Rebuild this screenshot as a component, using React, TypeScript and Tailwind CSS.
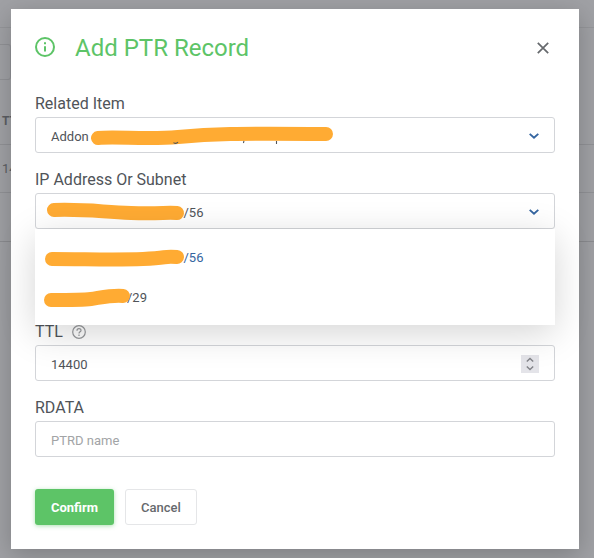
import { useState, type ReactNode } from 'react';

interface Subnet {
  id: string;
  mask: string;
  stroke: string;
  indent: string;
}

const SUBNETS: Subnet[] = [
  { id: 'v6', mask: '/56', stroke: 'M17 22 C50 22 80 23 108 22 S125 19 142 20', indent: 'pl-[148.5px]' },
  { id: 'v4', mask: '/29', stroke: 'M16 23 C36 23 48 23 56 22 S76 18 88 19', indent: 'pl-[92px]' },
];

function Chevron() {
  return (
    <svg className="shrink-0" width="10" height="6" viewBox="0 0 10 6" fill="none" stroke="#3465a0" strokeWidth="1.9">
      <path d="M0.7 0.9 L5 4.7 L9.3 0.9" />
    </svg>
  );
}

// marker line drawn over private values
function Marker({ d, children }: { d: string; children?: ReactNode }) {
  return (
    <svg className="absolute left-0 top-0 pointer-events-none" width="330" height="36" fill="none">
      <path d={d} stroke="#ffab33" strokeWidth="14" strokeLinecap="round" strokeLinejoin="round" />
      {children}
    </svg>
  );
}

function Field({ label, help, children }: { label: string; help?: ReactNode; children: ReactNode }) {
  return (
    <div className="mb-4">
      <div className="flex items-center h-[22px] mb-[2px] text-[16px] leading-[22px] text-[#505459]">
        {label}
        {help}
      </div>
      {children}
    </div>
  );
}

export default function App() {
  const [selected, setSelected] = useState('v6');
  const [ttl, setTtl] = useState('14400');
  const box = 'relative flex items-center w-full h-9 px-[15px] pt-[2px] border border-[#d3d5d9] rounded-[3px] text-[13px] text-[#505459]';

  return (
    <div className="relative w-[594px] h-[558px] overflow-hidden bg-[#a0a1a5] font-[Roboto,sans-serif]">
      {/* page behind the dialog */}
      <div className="h-[28px] border-b border-[#95969a]" />
      <div className="h-[36px] mt-4 w-[11px] border-y border-r rounded-r-[3px] border-[#919296]" />
      <div className="h-[65px] pt-[33px] pl-[2px] border-b border-[#919296] text-[12px] leading-4 font-bold text-[#5c5e63]">TTL</div>
      <div className="h-[48px] pt-[16px] pl-[2px] border-b border-[#919296] text-[13px] leading-4 text-[#5c5e63]">14400</div>
      <div className="h-[49px] border-b border-[#8c8d91]" />

      <div className="absolute left-[11px] top-[9px] w-[568px] h-[540px] px-6 bg-white shadow-[0_6px_24px_rgba(0,0,0,0.22)]">
        <div className="flex items-center h-[78px]">
          <svg className="shrink-0 -mt-[2px]" width="20" height="20" viewBox="0 0 20 20" fill="none" stroke="#5dc467" strokeWidth="2">
            <circle cx="10" cy="10" r="9" />
            <path d="M10 9.2 V14.6 M10 5.3 V7.3" />
          </svg>
          <h1 className="ml-5 text-[24px] leading-8 text-[#5dc467]">Add PTR Record</h1>
          <button className="ml-auto mr-[6px]" aria-label="Close">
            <svg width="12" height="12" viewBox="0 0 12 12" fill="none" stroke="#66696d" strokeWidth="1.7">
              <path d="M0.8 0.8 L11.2 11.2 M11.2 0.8 L0.8 11.2" />
            </svg>
          </button>
        </div>

        <div className="pt-[6px]">
          <Field label="Related Item">
            <div className={box}>
              <span className="grow pt-[2px]">Addon</span>
              <Chevron />
              <Marker d="M62 20 C80 18 110 22 142 19 S200 15 290 16">
                <path d="M137.5 24.6 q2.5 1.8 4.5 -0.4 M208 23 l-0.6 2 M240.5 23 v3" stroke="#505459" strokeWidth="1.1" />
              </Marker>
            </div>
          </Field>

          <div className="relative mb-[92px]">
            <Field label="IP Address Or Subnet">
              <div className={box}>
                <span className="grow pt-[2px] pl-[132.5px]">/56</span>
                <Chevron />
                <Marker d="M18 16 C52 15 65 18 95 19 S130 18 141 19" />
              </div>
            </Field>
            <div className="absolute left-0 top-[60px] z-10 w-full py-2 bg-white shadow-[0_8px_36px_rgba(0,0,0,0.17)]">
              {SUBNETS.map((s) => (
                <div
                  key={s.id}
                  onClick={() => setSelected(s.id)}
                  className={`relative flex items-center h-10 pt-[2px] text-[13px] cursor-pointer ${s.indent} ${selected === s.id ? 'text-[#3465a0]' : 'text-[#505459]'}`}
                >
                  {s.mask}
                  <Marker d={s.stroke} />
                </div>
              ))}
            </div>
          </div>

          <Field
            label="TTL"
            help={
              <svg className="ml-[9px]" width="14" height="14" viewBox="0 0 14 14" fill="none" stroke="#97999c" strokeWidth="1.2">
                <circle cx="7" cy="7" r="6.3" />
                <path d="M5 5.7 C5 3 9 3.1 9 5.4 C9 6.9 7 6.8 7 8.5 M7 9.6 V10.9" />
              </svg>
            }
          >
            <div className={box}>
              <input className="grow pt-[2px] outline-none bg-transparent" value={ttl} onChange={(e) => setTtl(e.target.value)} />
              <div className="flex items-center justify-center w-[18px] h-[18px] bg-[#e4e4e9]">
                <svg width="8" height="14" viewBox="0 0 8 14" fill="none" stroke="#828388" strokeWidth="1.4">
                  <path d="M0.8 4.6 L4 1.5 L7.2 4.6 M0.8 9.4 L4 12.5 L7.2 9.4" />
                </svg>
              </div>
            </div>
          </Field>

          <Field label="RDATA">
            <input className={`${box} outline-none placeholder:text-[#a2a4a6]`} placeholder="PTRD name" />
          </Field>
        </div>

        <div className="flex gap-[11px] pt-4 text-[13px] font-medium">
          <button className="w-[79px] h-9 pt-[2px] rounded-[3px] bg-[#5dc467] text-white font-bold shadow-[0_1px_4px_rgba(93,196,103,0.5)]">Confirm</button>
          <button className="w-[72px] h-9 pt-[2px] rounded-[3px] border border-[#e5e6e8] text-[#66696d]">Cancel</button>
        </div>
      </div>
    </div>
  );
}
